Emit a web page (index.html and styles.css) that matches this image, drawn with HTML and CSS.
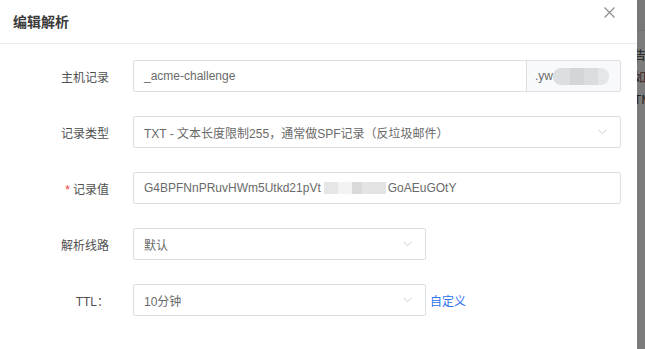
FILE: index.html
```html
<!DOCTYPE html>
<html lang="zh-CN">
<head>
    <meta charset="UTF-8">
    <title>编辑解析</title>
    <link rel="stylesheet" href="styles.css">
</head>
<body>
    <div class="page">
        <div class="dialog">
            <div class="dialog-header">
                <span class="dialog-title">编辑解析</span>
                <span class="dialog-close">
                    <svg width="11" height="11" viewBox="0 0 11 11"><path d="M0.5 0.5L10.5 10.5M10.5 0.5L0.5 10.5" stroke="#8c8c8c" stroke-width="1.1" fill="none"/></svg>
                </span>
            </div>

            <form class="dialog-body">
                <div class="form-row">
                    <label class="form-label">主机记录</label>
                    <div class="form-control input-group">
                        <span class="input-text">_acme-challenge</span>
                        <span class="input-addon">.yw<span class="mosaic pill"></span></span>
                    </div>
                </div>

                <div class="form-row">
                    <label class="form-label">记录类型</label>
                    <div class="form-control select">
                        <span class="input-text">TXT - 文本长度限制255，通常做SPF记录（反垃圾邮件）</span>
                        <span class="arrow"><svg width="9" height="6" viewBox="0 0 9 6"><path d="M0.5 0.8L4.5 4.8L8.5 0.8" stroke="#c8cbd1" stroke-width="1" fill="none"/></svg></span>
                    </div>
                </div>

                <div class="form-row">
                    <label class="form-label"><span class="required">*</span>记录值</label>
                    <div class="form-control">
                        <span class="input-text">G4BPFNnPRuvHWm5Utkd21pVt<span class="mosaic strip"></span>GoAEuGOtY</span>
                    </div>
                </div>

                <div class="form-row">
                    <label class="form-label">解析线路</label>
                    <div class="form-control select small">
                        <span class="input-text">默认</span>
                        <span class="arrow"><svg width="9" height="6" viewBox="0 0 9 6"><path d="M0.5 0.8L4.5 4.8L8.5 0.8" stroke="#c8cbd1" stroke-width="1" fill="none"/></svg></span>
                    </div>
                </div>

                <div class="form-row">
                    <label class="form-label">TTL：</label>
                    <div class="form-control select small">
                        <span class="input-text">10分钟</span>
                        <span class="arrow"><svg width="9" height="6" viewBox="0 0 9 6"><path d="M0.5 0.8L4.5 4.8L8.5 0.8" stroke="#c8cbd1" stroke-width="1" fill="none"/></svg></span>
                    </div>
                    <a class="link" href="#">自定义</a>
                </div>
            </form>
        </div>

        <div class="backdrop">
            <div class="backdrop-top"></div>
            <div class="backdrop-text">
                <p>告警</p>
                <p class="red">如</p>
                <p>TM</p>
            </div>
        </div>
    </div>
</body>
</html>
```

FILE: styles.css
```css
body {
    margin: 0;
    font-family: "Liberation Sans", Arial, "Noto Sans CJK SC", sans-serif;
    font-size: 12px;
    color: #333;
    background-color: #7d7d7d;
}

.page {
    display: flex;
    width: 645px;
    height: 349px;
    overflow: hidden;
}

.dialog {
    width: 637px;
    flex-shrink: 0;
    background: #fff;
}

.dialog-header {
    display: flex;
    align-items: center;
    justify-content: space-between;
    height: 41px;
    padding: 0 22px 2px 13px;
    border-bottom: 1px solid #ececec;
}

.dialog-title {
    font-size: 14px;
    font-weight: bold;
    color: #3a3a3a;
}

.dialog-close {
    display: flex;
    margin-bottom: 17px;
}

.dialog-body {
    padding-top: 16px;
}

.form-row {
    display: flex;
    align-items: center;
    height: 32px;
    margin-bottom: 24px;
}

.form-label {
    width: 109px;
    margin-right: 24px;
    text-align: right;
    color: #505050;
}

.required {
    color: #f04134;
    margin-right: 3px;
}

.form-control {
    display: flex;
    align-items: center;
    box-sizing: border-box;
    width: 488px;
    height: 32px;
    border: 1px solid #dcdee3;
    border-radius: 2px;
    color: #6a6a6a;
}

.form-control.small {
    width: 293px;
}

.input-text {
    flex: 1;
    display: flex;
    align-items: center;
    padding-left: 10px;
    white-space: nowrap;
}

.input-group {
    overflow: hidden;
}

.input-addon {
    display: flex;
    align-items: center;
    align-self: stretch;
    width: 85px;
    padding-left: 8px;
    border-left: 1px solid #dcdee3;
    background: #f8f9fb;
    color: #6a6a6a;
}

.mosaic.pill {
    width: 56px;
    height: 17px;
    border-radius: 8px;
    background: linear-gradient(90deg, #dcdee2 0 30%, #d3d5d9 30% 55%, #dadce0 55% 80%, #e4e6e9 80%);
}

.mosaic.strip {
    width: 62px;
    height: 12px;
    margin: 0 2px 0 3px;
    background: linear-gradient(90deg, #e6e6e6 0 22%, #f3f3f3 22% 45%, #dadada 45% 62%, #e4e4e4 62% 100%);
}

.arrow {
    display: flex;
    padding-right: 13px;
}

.link {
    margin-left: 4px;
    color: #2f74eb;
    text-decoration: none;
}

.backdrop {
    flex: 1;
    background: #7c7c7c;
    overflow: hidden;
}

.backdrop-top {
    height: 30px;
    border-bottom: 1px solid #707070;
    background: #787878;
}

.backdrop-text {
    margin-left: -3px;
    padding-top: 16px;
    font-family: "Noto Sans CJK SC", sans-serif;
    font-size: 12px;
    color: #1e1e1e;
    white-space: nowrap;
}

.backdrop-text p {
    margin: 0 0 6px;
    line-height: 16px;
}

.backdrop-text .red {
    color: #3a1a1a;
}
```
